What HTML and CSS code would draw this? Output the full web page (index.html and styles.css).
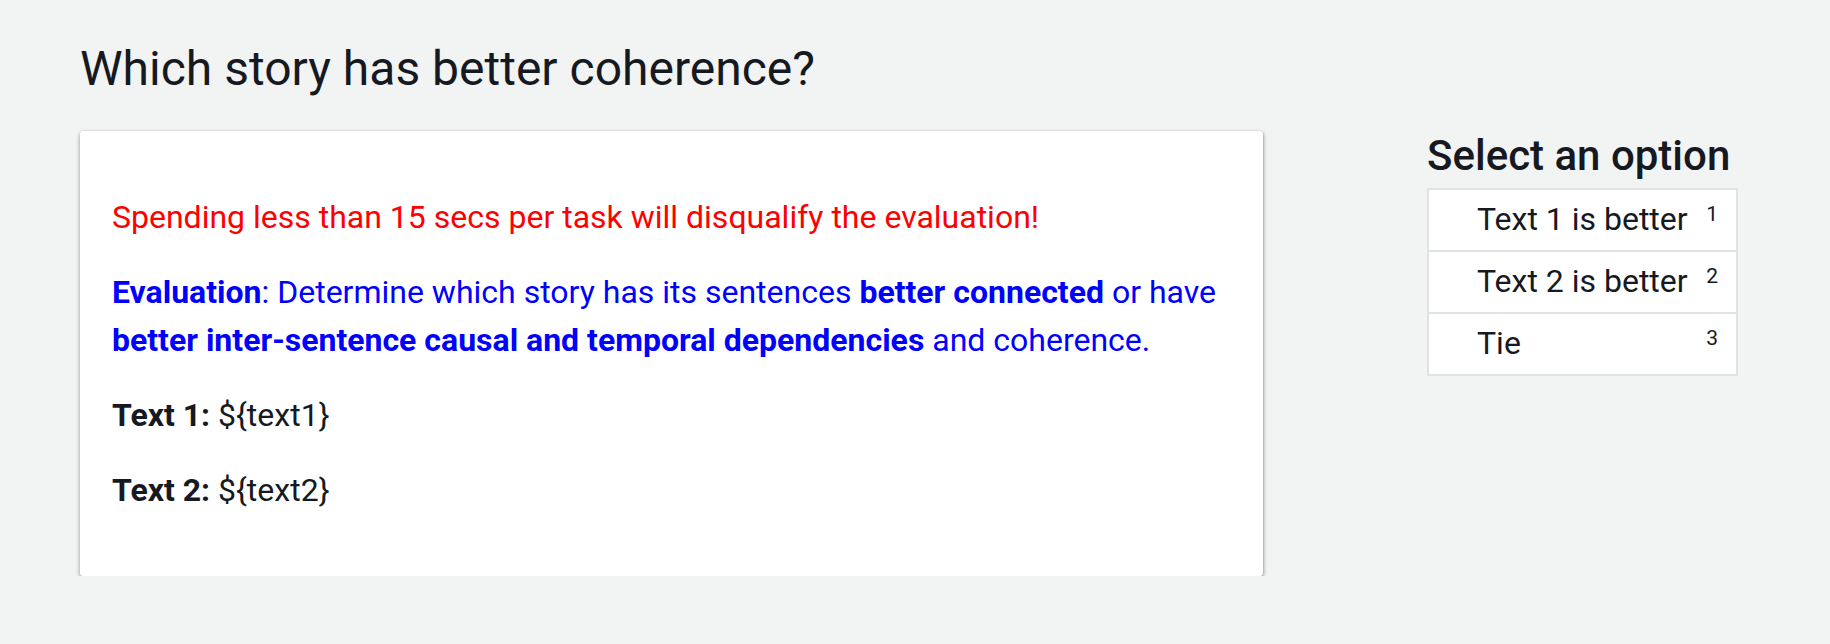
FILE: index.html
```html
<!DOCTYPE html>
<html lang="en">

<head>
  <meta charset="UTF-8">
  <meta name="viewport" content="width=device-width, initial-scale=1.0">
  <title>Which story has better coherence?</title>
  <link rel="stylesheet" href="styles.css">
</head>

<body>
  <div id="classifier">
    <h1 class="task-title">Which story has better coherence?</h1>

    <div class="flex-row">
      <div class="card">
        <p class="warning">Spending less than 15 secs per task will disqualify the evaluation!</p>
        <p class="instructions">
          <strong>Evaluation</strong>: Determine which story has its sentences <strong>better connected</strong> or have
          <strong>better inter-sentence causal and temporal dependencies</strong> and coherence.
        </p>
        <p><strong>Text 1:</strong> ${text1}</p>
        <p><strong>Text 2:</strong> ${text2}</p>
      </div>

      <div class="sidebar">
        <h2>Select an option</h2>
        <ul class="options">
          <li><span>Text 1 is better</span><sup>1</sup></li>
          <li><span>Text 2 is better</span><sup>2</sup></li>
          <li><span>Tie</span><sup>3</sup></li>
        </ul>
      </div>
    </div>
  </div>
</body>

</html>
```

FILE: styles.css
```css
body {
  background-color: #f2f3f3;
  margin: 0;
  font-family: Roboto, 'Liberation Sans', sans-serif;
  color: #16191f;
}

#classifier {
  padding: 40px 0 0 80px;
}

.task-title {
  font-size: 48px;
  font-weight: 400;
  line-height: normal;
  margin: 0 0 34px 0;
}

.flex-row {
  display: flex;
  flex-direction: row;
  align-items: flex-start;
}

.card {
  width: 1183px;
  box-sizing: border-box;
  background-color: #fff;
  border-radius: 3px;
  box-shadow: 0 2px 4px rgba(0, 0, 0, 0.4), 1px 0 2px rgba(0, 0, 0, 0.1);
  padding: 62px 32px 62px 32px;
  font-size: 32px;
  line-height: 48px;
}

.card p {
  margin: 0 0 27px 0;
}

.card p:last-child {
  margin-bottom: 0;
}

.warning {
  color: #ff0000;
}

.instructions {
  color: #0000ff;
}

strong {
  font-weight: 700;
}

.sidebar {
  width: 311px;
  margin-left: 164px;
}

.sidebar h2 {
  font-size: 42px;
  font-weight: 500;
  line-height: normal;
  margin: 0 0 8px 0;
}

.options {
  list-style: none;
  margin: 0;
  padding: 0;
  background-color: #fff;
  border: 2px solid #e1e2e2;
}

.options li {
  display: flex;
  justify-content: space-between;
  align-items: flex-start;
  height: 60px;
  padding: 0 18px 0 48px;
  font-size: 32px;
  line-height: 58px;
  border-top: 2px solid #e1e2e2;
}

.options li:first-child {
  border-top: none;
}

.options sup {
  font-size: 21px;
  line-height: 21px;
  margin-top: 14px;
  vertical-align: baseline;
}
```
